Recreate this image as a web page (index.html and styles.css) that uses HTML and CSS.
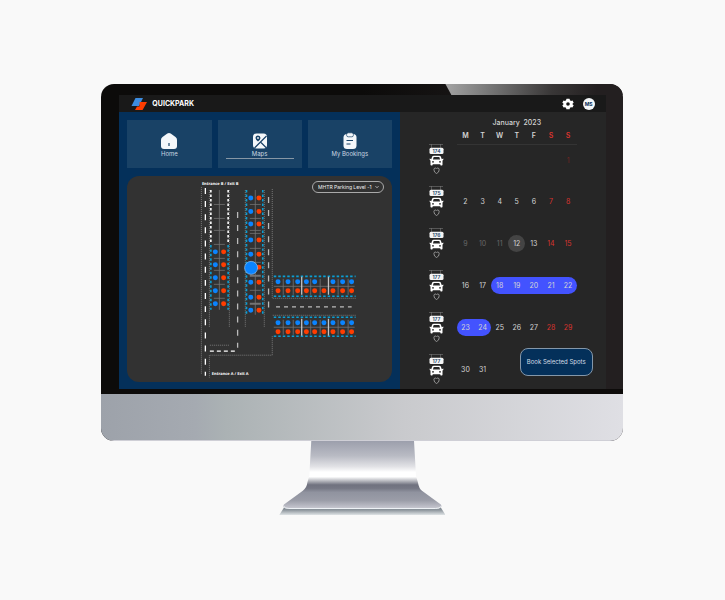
FILE: index.html
```html
<!DOCTYPE html>
<html lang="en">
<head>
<meta charset="utf-8">
<title>QuickPark</title>
<link rel="stylesheet" href="styles.css">
</head>
<body>
<svg class="symbols" aria-hidden="true">
  <symbol id="car" viewBox="0 0 15 31">
    <path d="M0 .5H14M2.500 0V5M11.500 0V5" stroke="#777" stroke-width=".6" fill="none"/>
    <rect x=".5" y="3.800" width="14" height="6.200" rx="1.500" fill="#f4f4f4"/>
    <path d="M3.200 12.600Q3.600 11.700 4.800 11.700H10.200Q11.400 11.700 11.800 12.600L12.800 15.200 14.300 14.500V16L13.500 16.400V20.700Q13.500 21.400 12.700 21.400H12Q11.300 21.400 11.300 20.700V20.200H3.700V20.700Q3.700 21.400 3 21.400H2.300Q1.500 21.400 1.500 20.700V16.400L.7 16V14.500L2.200 15.200ZM4.700 13.100 3.900 15.500H11.100L10.300 13.100Z" fill="#fff" fill-rule="evenodd"/>
    <circle cx="4" cy="17.800" r=".9" fill="#262626"/><circle cx="11" cy="17.800" r=".9" fill="#262626"/>
    <path d="M7.500 29.500Q5 28.500 4.900 25.700Q5 24 6.300 24Q7.100 24 7.500 24.700Q7.900 24 8.700 24Q10.200 24 10.200 25.700Q10.200 28.500 7.500 29.500Z" fill="none" stroke="#bbb" stroke-width=".7"/>
  </symbol>
</svg>
<main class="computer">
  <div class="monitor">
    <div class="screen">
      <header class="topbar">
        <svg class="logo" viewBox="0 0 16 12" aria-hidden="true"><path d="M4.500 0H12L8 8H.5Z" fill="#3c8ce0"/><path d="M8.600 4H16L11.600 12H4L6 8.500H8.500Z" fill="#ff3d00"/></svg>
        <span class="brand">QUICKPARK</span>
        <button class="gear" aria-label="Settings"><svg viewBox="0 0 12 12"><path d="M4.500 .7H7.500L8 2.300 9 2.900 10.500 2.400 11.700 4.800 10.600 5.600V6.500L11.700 7.300 10.400 9.600 9 9.200 8 9.800 7.600 11.300H4.400L4 9.800 3 9.200 1.600 9.600 .3 7.300 1.400 6.500V5.600L.3 4.800 1.500 2.400 3 2.900 4 2.300ZM6 4.200A1.800 1.800 0 1 0 6 7.800A1.800 1.800 0 1 0 6 4.200Z" fill="#fff" fill-rule="evenodd"/></svg></button>
        <button class="avatar">MS</button>
      </header>
      <div class="panels">
        <section class="parking">
          <nav class="tabs">
            <a class="tab" href="#home"><svg viewBox="0 0 18 18"><path d="M7.300 1.500Q9 .4 10.700 1.500L15.500 5Q17 6.200 17 8V14Q17 17 14 17H4Q1 17 1 14V8Q1 6.200 2.500 5Z" fill="#f4f7fa"/><path d="M9 11V14" stroke="#194266" stroke-width="1.200"/></svg><span>Home</span></a>
            <a class="tab current" href="#maps"><svg viewBox="0 0 18 18"><rect x="2" y="1.500" width="14" height="15" rx="3.500" fill="#f4f7fa"/><path d="M3.500 16 15.500 4M10 10.500 15.500 16" stroke="#194266" stroke-width="1.200"/><path d="M7 9.500Q4.500 7.500 4.500 6A2.500 2.500 0 0 1 9.500 6Q9.500 7.500 7 9.500Z" fill="#194266"/><circle cx="7" cy="6" r=".9" fill="#f4f7fa"/></svg><span>Maps</span></a>
            <a class="tab" href="#bookings"><svg viewBox="0 0 18 18"><rect x="2.500" y="2" width="13" height="15" rx="3.500" fill="#f4f7fa"/><rect x="5.600" y=".8" width="6.800" height="4" rx="1.600" fill="#f4f7fa" stroke="#194266" stroke-width=".7"/><path d="M5.500 8.500H12M5.500 12H9.500" stroke="#194266" stroke-width="1"/></svg><span>My Bookings</span></a>
          </nav>
          <div class="map">
            <svg class="plan" viewBox="127 176 265 206" role="img" aria-label="Parking level plan">
              <g class="dotted">
                <path d="M201.500 187V374M209.500 190V328M229.500 190V328M245.500 190V328M264.500 190V328M272.500 189V298.500H356M356 315.500H272.500M272.500 336.500V355.500H209.500V378M210 345.500H230"/>
              </g>
              <g class="lane">
                <path d="M205.500 188V376" stroke-dasharray="6 7.150"/>
                <path d="M237.800 212V348M268.800 197V309" class="dim" stroke-dasharray="6 7.100"/>
                <path d="M276.300 307H352" class="dim" stroke-dasharray="4 4"/>
                <path d="M210 351.500H236" stroke-dasharray="4 3"/>
              </g>
              <path class="kerb white" d="M211 190V244M228.300 190V244"/>
              <path class="kerb" d="M211 245V310M228.300 245V310M246.700 190V315M263 190V315M274 276.500H356M274 296.500H356M274 317.500H356M274 336.500H356"/>
              <path class="bay" d="M219.500 190V310M214 204.500H225M214 218.500H225M214 230.500H225M214 244.500H225M214 258.500H225M214 270.500H225M214 284.500H225M214 298.500H225M255.500 190V315M250 204.500H261M250 218.500H261M250 230.500H261M250 233.500H261M250 248.500H261M250 262.500H261M250 290.500H261M274 286.500H355M274 327.500H355M283.500 279V295M293.500 279V295M311 279V295M320.500 279V295M338.500 279V295M348.500 279V295M283.500 320V335M293.500 320V335M311 320V335M320.500 320V335M338.500 320V335M348.500 320V335"/>
              <path class="bay thick" d="M250 276H261M250 304H261"/>
              <path class="pillar" d="M302 277V295M328.800 277V295M302 319V336M328.800 319V336"/>
              <path class="spot free" d="M215.500 252h0M215.500 265h0M215.500 278h0M215.500 291h0M215.500 304h0M251 198h0M251 211.500h0M251 224h0M251 240h0M251 254.500h0M251 282.500h0M251 297.500h0M251 310.500h0M278.300 282h0M288.300 282h0M298 282h0M306.700 282h0M315 282h0M333.300 282h0M343 282h0M352 282h0M278.300 323h0M288.300 323h0M298 323h0M306.700 323h0M315 323h0M324.300 323h0M333.300 323h0M343 323h0M352 323h0"/>
              <path class="spot taken" d="M223.800 252h0M223.800 265h0M223.800 278h0M223.800 291h0M223.800 304h0M259.200 198h0M259.200 211.500h0M259.200 224h0M259.200 240h0M259.200 254.500h0M259.200 267.500h0M259.200 282.500h0M259.200 297.500h0M259.200 310.500h0M278.300 291h0M288.300 291h0M298 291h0M306.700 291h0M315 291h0M324.300 291h0M333.300 291h0M343 291h0M352 291h0M278.300 332h0M288.300 332h0M298 332h0M306.700 332h0M315 332h0M324.300 332h0M333.300 332h0M343 332h0M352 332h0"/>
              <circle class="chosen" cx="251.300" cy="268" r="6.500"/>
              <text class="gate" x="202" y="185">Entrance B / Exit B</text>
              <text class="gate" x="212" y="375">Entrance A / Exit A</text>
            </svg>
            <div class="level">
              <select aria-label="Parking level"><option>MHTR Parking Level -1</option></select>
              <svg viewBox="0 0 4 4" aria-hidden="true"><path d="M.5 1.200 2 2.700 3.500 1.200" fill="none" stroke="#eee" stroke-width=".7"/></svg>
            </div>
          </div>
        </section>
        <section class="booking">
          <table class="calendar">
            <caption>January&nbsp; 2023</caption>
            <thead>
              <tr><td class="spotcol"></td><th>M</th><th>T</th><th>W</th><th>T</th><th>F</th><th class="off">S</th><th class="off">S</th></tr>
            </thead>
            <tbody>
              <tr><th><svg class="car"><use href="#car"/><text x="7.500" y="9">174</text></svg></th><td></td><td></td><td></td><td></td><td></td><td></td><td class="off faded"><span>1</span></td></tr>
              <tr><th><svg class="car"><use href="#car"/><text x="7.500" y="9">175</text></svg></th><td><span>2</span></td><td><span>3</span></td><td><span>4</span></td><td><span>5</span></td><td><span>6</span></td><td class="off"><span>7</span></td><td class="off"><span>8</span></td></tr>
              <tr><th><svg class="car"><use href="#car"/><text x="7.500" y="9">176</text></svg></th><td class="past"><span>9</span></td><td class="past"><span>10</span></td><td class="past"><span>11</span></td><td class="today"><span>12</span></td><td><span>13</span></td><td class="off"><span>14</span></td><td class="off"><span>15</span></td></tr>
              <tr><th><svg class="car"><use href="#car"/><text x="7.500" y="9">177</text></svg></th><td><span>16</span></td><td><span>17</span></td><td class="picked first"><span>18</span></td><td class="picked"><span>19</span></td><td class="picked"><span>20</span></td><td class="picked"><span>21</span></td><td class="picked last"><span>22</span></td></tr>
              <tr><th><svg class="car"><use href="#car"/><text x="7.500" y="9">177</text></svg></th><td class="picked first"><span>23</span></td><td class="picked last"><span>24</span></td><td><span>25</span></td><td><span>26</span></td><td><span>27</span></td><td class="off"><span>28</span></td><td class="off"><span>29</span></td></tr>
              <tr><th><svg class="car"><use href="#car"/><text x="7.500" y="9">177</text></svg></th><td><span>30</span></td><td><span>31</span></td><td></td><td></td><td></td><td></td><td></td></tr>
            </tbody>
          </table>
          <button class="book">Book Selected Spots</button>
        </section>
      </div>
    </div>
    <div class="chin"></div>
  </div>
  <svg class="stand" viewBox="0 0 168 75" aria-hidden="true">
    <defs>
      <linearGradient id="neck" x1="0" y1="0" x2="0" y2="1">
        <stop offset="0" stop-color="#9c9fac"/><stop offset=".22" stop-color="#b9bbc4"/><stop offset=".38" stop-color="#e2e2e6"/><stop offset=".46" stop-color="#fff"/><stop offset=".53" stop-color="#fff"/><stop offset=".65" stop-color="#70727f"/><stop offset=".7" stop-color="#757784"/><stop offset=".76" stop-color="#90939f"/><stop offset=".88" stop-color="#9b9da8"/><stop offset="1" stop-color="#c8c8d1"/>
      </linearGradient>
      <linearGradient id="foot" gradientUnits="userSpaceOnUse" x1="0" y1="66" x2="0" y2="75"><stop offset="0" stop-color="#727b84"/><stop offset=".4" stop-color="#8f979e"/><stop offset="1" stop-color="#e6eaec"/></linearGradient>
    </defs>
    <path d="M5 67H163L168 75H0Z" fill="url(#foot)"/>
    <path d="M32.500 0H136L138 35 140 42Q141 48 144 50L163 64Q165 67 161 68H7Q3 67 5 64L24 50Q28 47 28.500 42L30.500 35Z" fill="url(#neck)"/>
    <path d="M5 66Q6 68 10 68H158Q162 68 163 66" fill="none" stroke="#eef2f5" stroke-width="1"/>
  </svg>
</main>
</body>
</html>
```

FILE: styles.css
```css
* { box-sizing: border-box; }
body {
  margin: 0;
  padding-right: 1px;
  background: #f9f9f9;
  font-family: Inter, "Liberation Sans", sans-serif;
  color: #eee;
}
button, select { font: inherit; color: inherit; margin: 0; padding: 0; border: 0; background: none; }
.symbols { position: absolute; width: 0; height: 0; }
.computer {
  width: 72%;
  margin: 0 auto;
  padding-top: 84px;
  display: flex;
  flex-direction: column;
  align-items: center;
}
.monitor {
  position: relative;
  width: 100%;
  border-radius: 13px;
  overflow: hidden;
  background: linear-gradient(90deg, #0c0b0a 50%, #231f20 90%);
}
.monitor::before {
  content: "";
  position: absolute;
  top: 0;
  right: 0;
  width: 34%;
  height: 11px;
  background: linear-gradient(100deg, #a5a5a5 0, #777 25%, #393737 60%, #231f20 85%);
  clip-path: polygon(0 0, 100% 0, 100% 100%, 6px 100%);
}
.screen { padding: 11px 17px 0 18px; border-bottom: 5px solid #0d0b0a; }
.topbar {
  height: 17px;
  padding: 0 11px 0 12px;
  display: flex;
  align-items: center;
  background: #191919;
}
.logo { width: 16px; height: 12px; }
.brand { margin: 0 auto 0 5px; font-size: 7px; font-weight: 700; color: #fff; }
.gear { display: flex; width: 12px; height: 12px; margin-right: 9px; }
.gear svg { width: 100%; }
.avatar {
  width: 12px;
  height: 12px;
  border-radius: 50%;
  background: #f4f6f8;
  color: #04305a;
  font-size: 5px;
  font-weight: 700;
  line-height: 12px;
  text-align: center;
}
.panels { display: grid; grid-template-columns: 281fr 206fr; }
.parking { padding: 8px 8px 7px; background: #04305a; }
.tabs { display: grid; grid-template-columns: repeat(3, 1fr); gap: 6px; margin-bottom: 8px; }
.tab {
  height: 48px;
  padding: 12px 8px 0;
  display: flex;
  flex-direction: column;
  align-items: center;
  background: #194266;
  color: #c9d6e1;
  font-size: 6px;
  line-height: 8px;
  text-decoration: none;
}
.tab svg { width: 18px; height: 18px; }
.tab span { width: 100%; text-align: center; border-bottom: 1px solid transparent; }
.tab.current span { border-color: #8797a5; }
.map { position: relative; background: #323232; border-radius: 12px; }
.plan { display: block; width: 100%; }
.plan path { fill: none; }
.dotted path { stroke: #999; stroke-width: .7; stroke-dasharray: 1 1; }
.lane path { stroke: #fff; stroke-width: 1.3; }
.lane .dim { stroke: #bbb; }
.kerb { stroke: #0b9fd4; stroke-width: 1.6; stroke-dasharray: 2.500 2; }
.kerb.white { stroke: #fff; }
.bay { stroke: #747474; stroke-width: .8; }
.thick { stroke-width: 2; }
.pillar { stroke: #c4c4c4; stroke-width: 1.3; }
.spot { stroke-width: 5; stroke-linecap: round; }
.free { stroke: #0a84ff; }
.taken { stroke: #ff3d00; }
.chosen { fill: #0a84ff; stroke: #8fc1f0; stroke-width: .7; }
.gate { fill: #fff; font-family: "Open Sans", sans-serif; font-size: 4px; font-weight: 700; text-rendering: geometricPrecision; }
.level {
  position: absolute;
  top: 5px;
  right: 8px;
  height: 12px;
  padding: 0 4px 0 5px;
  display: flex;
  align-items: center;
  gap: 3px;
  border: 1px solid #aaa;
  border-radius: 6px;
}
.level select { appearance: none; font-size: 5px; line-height: 8px; }
.level svg { width: 4px; height: 4px; }
.booking { position: relative; padding: 6px 29px 0; background: #262626; }
.calendar { width: 100%; table-layout: fixed; border-collapse: collapse; font-size: 7px; color: #d4d4d4; }
.calendar caption { padding-left: 28px; line-height: 10px; font-weight: 500; }
.calendar th, .calendar td { padding: 0; text-align: center; vertical-align: top; font-weight: 400; }
.calendar .spotcol { width: 28px; border: 0; }
.calendar thead th { height: 16px; line-height: 15px; font-weight: 600; border-bottom: 1px solid #343434; }
.calendar tbody tr { height: 42px; }
.calendar tbody tr:last-child { height: 31px; }
.calendar tbody th { text-align: left; }
.calendar td span { display: block; height: 17px; margin-top: 7px; line-height: 17px; }
.calendar .off { color: #d9342e; }
.calendar .faded { color: #762522; }
.calendar .past { color: #666; }
.today span { background: #444; border-radius: 50%; }
.picked span { background: #4353ff; }
.first span { border-radius: 9px 0 0 9px; }
.last span { border-radius: 0 9px 9px 0; }
.car { display: block; width: 15px; height: 31px; }
.car text { font-size: 5px; font-weight: 600; fill: #194266; text-anchor: middle; }
.book {
  position: absolute;
  right: 13px;
  bottom: 13px;
  height: 28px;
  padding: 0 6px;
  border: 1px solid #8497a9;
  border-radius: 8px;
  background: #04305a;
  color: #d5dee6;
  font-size: 6px;
}
.chin {
  height: 47px;
  background: linear-gradient(90deg, #9da2aa, #a5aab1 18%, #abb2b4 24%, #c9cacd 58%, #dfdfe4);
  border-bottom: 1px solid #cfcfd6;
}
.stand { width: 32%; }
```
